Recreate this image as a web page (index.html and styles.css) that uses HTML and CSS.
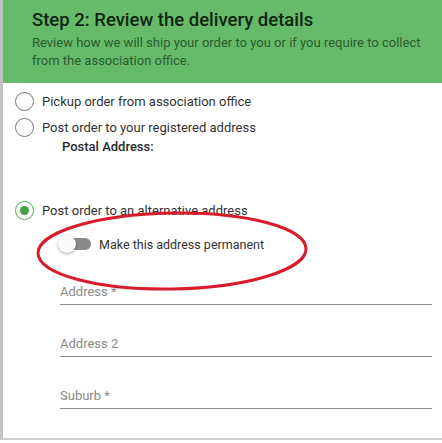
FILE: index.html
```html
<!DOCTYPE html>
<html>
<head>
  <title>Delivery details</title>
  <meta name="viewport" content="width=device-width, initial-scale=1.0">
  <link rel="stylesheet" href="styles.css">
</head>
<body>
  <div class="card">
    <div class="step-header">
      <h2>Step 2: Review the delivery details</h2>
      <p>Review how we will ship your order to you or if you require to collect from the association office.</p>
    </div>

    <div class="options">
      <label class="radio">
        <span class="dot"></span>
        Pickup order from association office
      </label>
      <label class="radio">
        <span class="dot"></span>
        Post order to your registered address
      </label>
      <div class="postal">Postal Address:</div>

      <label class="radio checked">
        <span class="dot"></span>
        Post order to an alternative address
      </label>

      <div class="alt">
        <div class="toggle-row">
          <span class="toggle"><span class="thumb"></span></span>
          Make this address permanent
        </div>

        <div class="field first">Address *</div>
        <div class="field">Address 2</div>
        <div class="field">Suburb *</div>
      </div>

      <!-- hand drawn highlight -->
      <svg class="mark" width="280" height="86" viewBox="0 0 280 86">
        <ellipse cx="137" cy="41" rx="134" ry="38" fill="none" stroke="#d71d2b" stroke-width="3" transform="rotate(-1 137 41)"/>
      </svg>
    </div>
  </div>
</body>
</html>
```

FILE: styles.css
```css
* {
  box-sizing: border-box;
}

body {
  margin: 0;
  background: #fff;
  font-family: Roboto, "Noto Sans", sans-serif;
}

.card {
  border-left: 3px solid #c2c2c2;
  border-bottom: 2px solid #cfcfcf;
  height: 440px;
}

.step-header {
  background-color: #66bb6a;
  padding: 7px 20px 0 29px;
  height: 83px;
}

.step-header h2 {
  margin: 0;
  font-size: 18.5px;
  font-weight: 500;
  color: #0f2612;
  line-height: 26px;
}

.step-header p {
  margin: 1px 0 0;
  font-size: 13px;
  line-height: 18px;
  color: #2b5c2e;
}

.options {
  position: relative;
  padding: 5px 0 0 12px;
}

.radio {
  display: flex;
  align-items: center;
  gap: 8px;
  height: 26px;
  font-size: 13px;
  color: #333;
}

.dot {
  width: 19px;
  height: 19px;
  border: 1.5px solid #777;
  border-radius: 50%;
  display: inline-flex;
  align-items: center;
  justify-content: center;
}

.radio.checked {
  margin-top: 43px;
}

.radio.checked .dot {
  border-color: #4caf50;
}

.radio.checked .dot::after {
  content: "";
  width: 9px;
  height: 9px;
  border-radius: 50%;
  background: #43a047;
}

.postal {
  padding-left: 47px;
  font-size: 13px;
  font-weight: 500;
  color: #2a2a2a;
  line-height: 14px;
}

.alt {
  padding: 11px 10px 0 45px;
}

.toggle-row {
  display: flex;
  align-items: center;
  font-size: 12.5px;
  color: #333;
  height: 20px;
}

.toggle {
  position: relative;
  width: 30px;
  height: 12px;
  border-radius: 6px;
  background: #8a8a8a;
  margin: 0 8px 0 1px;
}

.toggle .thumb {
  position: absolute;
  left: -3px;
  top: -3px;
  width: 18px;
  height: 18px;
  border-radius: 50%;
  background: #fafafa;
  box-shadow: 0 1px 3px rgba(0, 0, 0, 0.35);
}

.field {
  display: flex;
  align-items: flex-end;
  height: 52px;
  padding-bottom: 3px;
  border-bottom: 1px solid #8c8c8c;
  font-size: 13px;
  color: #8a8a8a;
  line-height: 18px;
}

.field.first {
  height: 51px;
}

.mark {
  position: absolute;
  left: 32px;
  top: 127px;
}
```
